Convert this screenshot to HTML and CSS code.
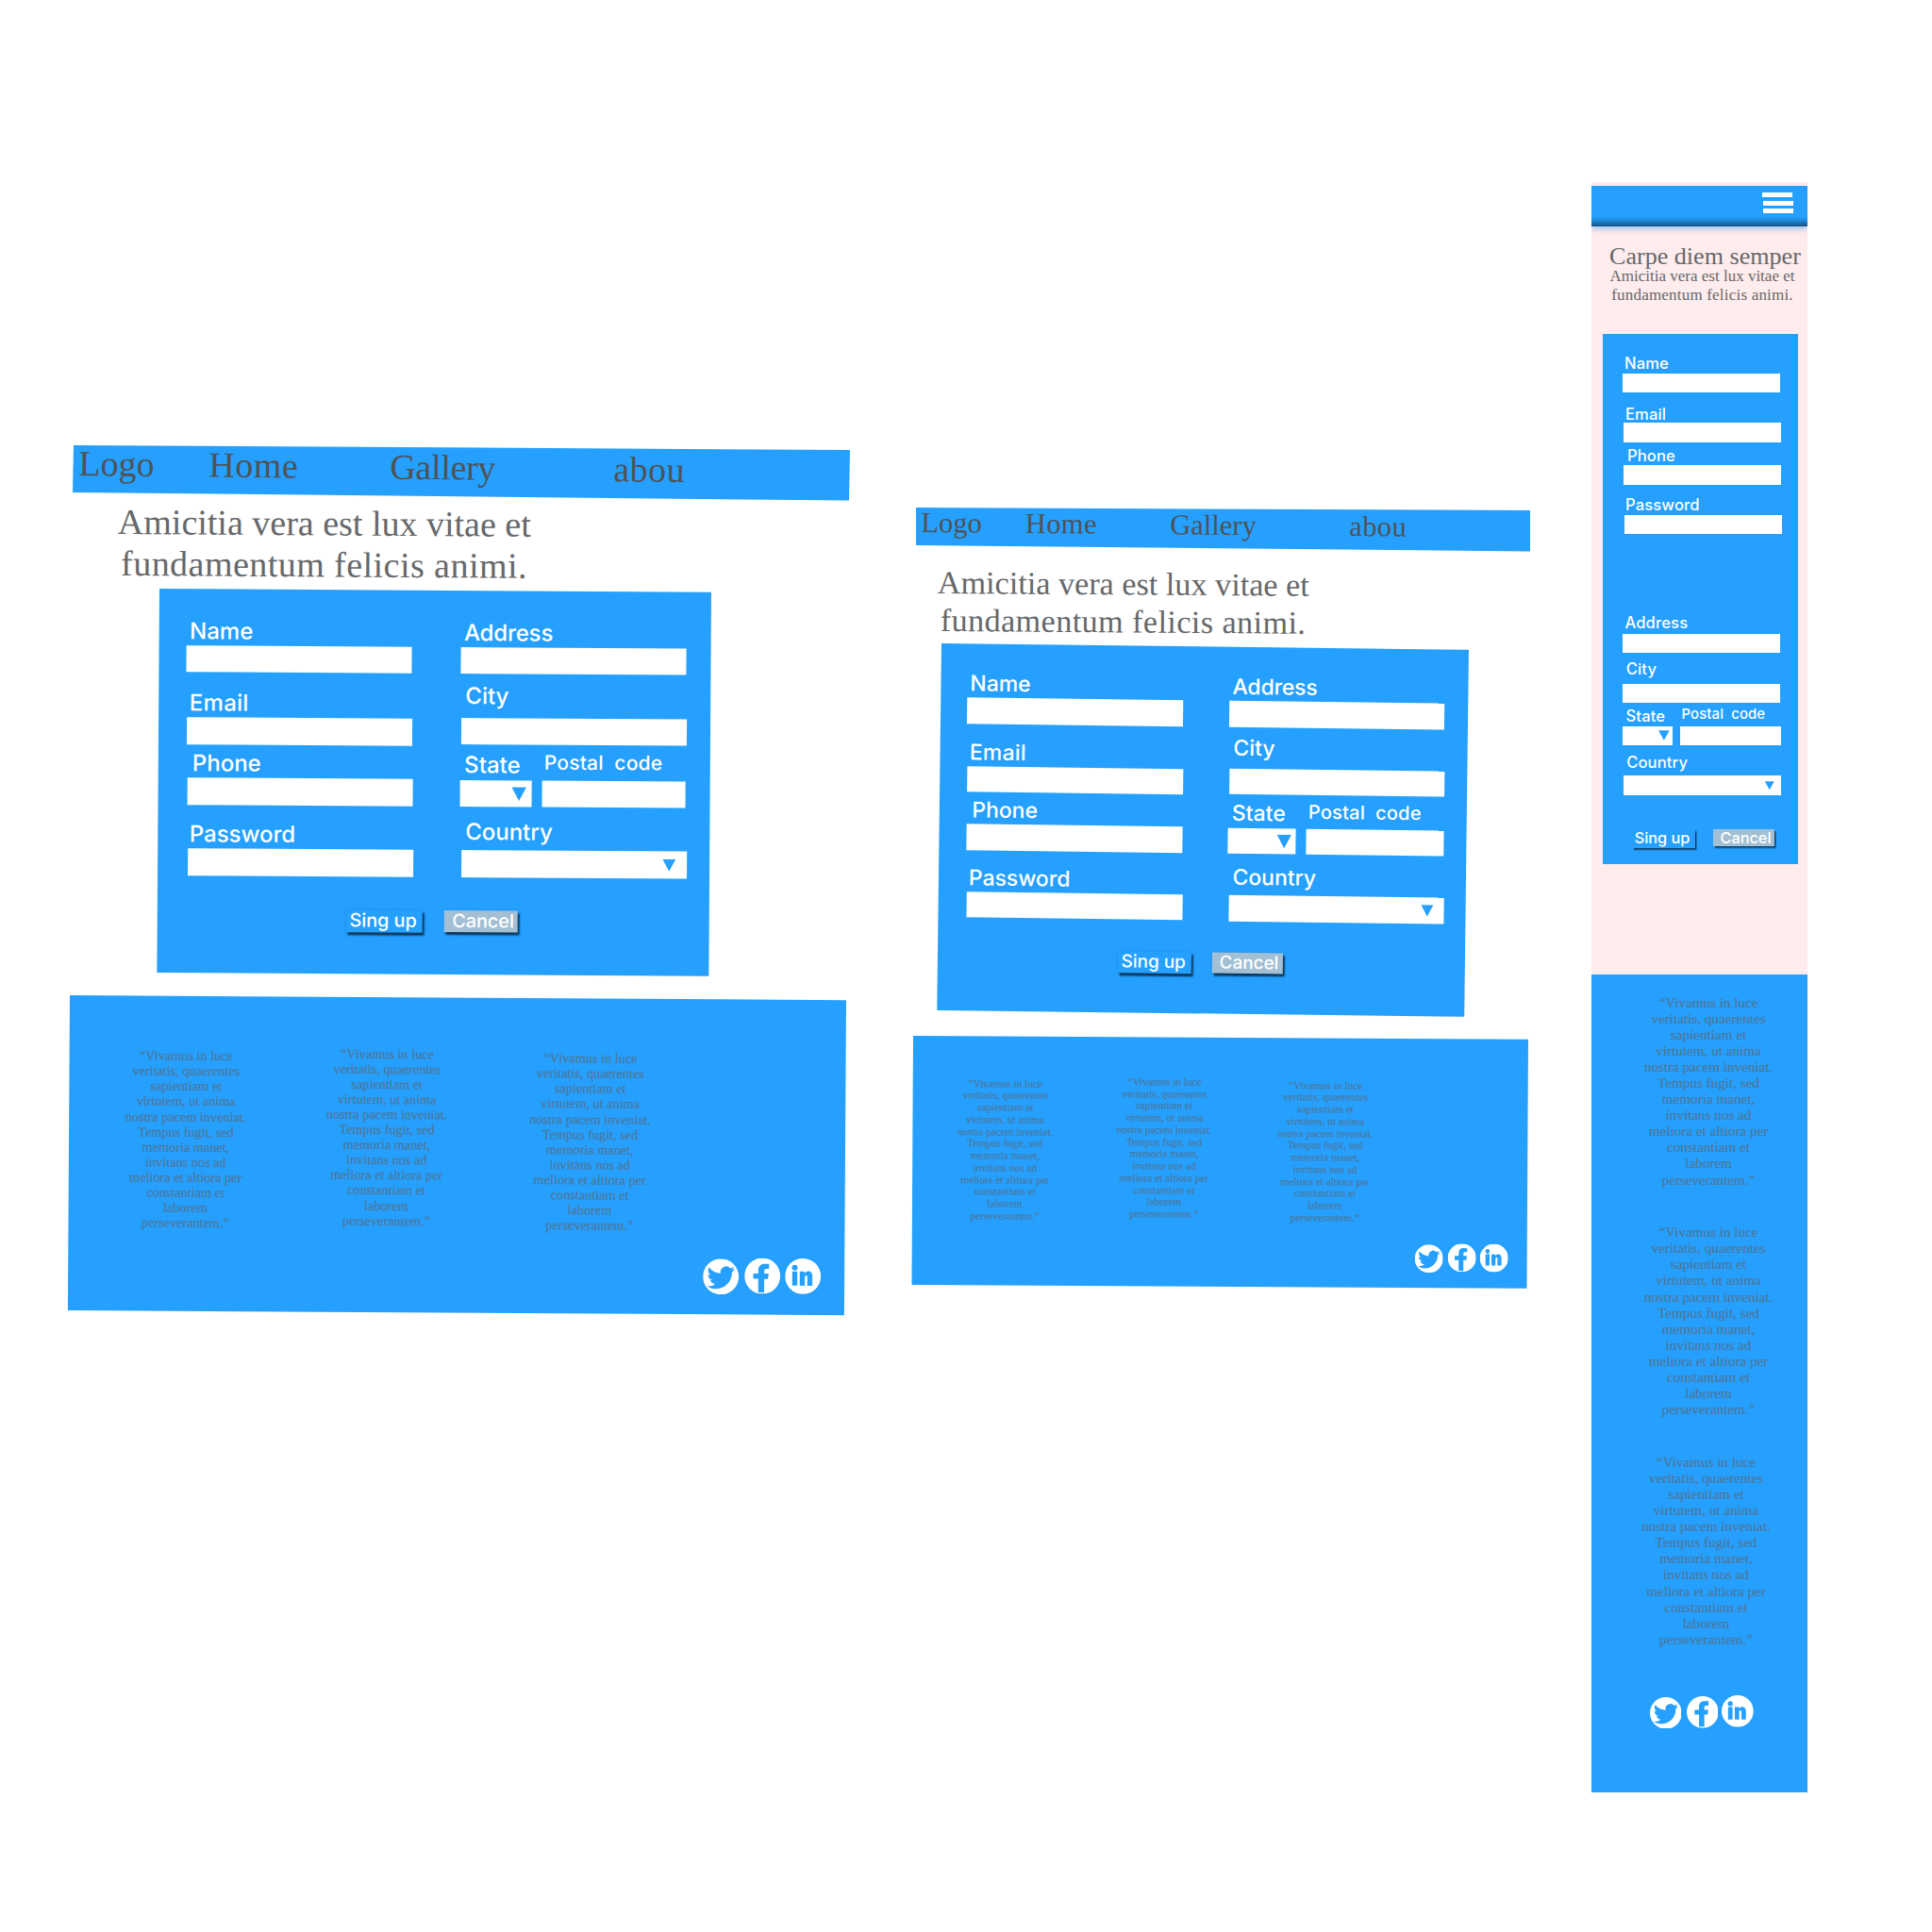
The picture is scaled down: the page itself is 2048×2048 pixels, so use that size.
FILE: index.html
```html
<!DOCTYPE html>
<html lang="en">
<head>
<meta charset="utf-8">
<title>Sign up form</title>
<link rel="stylesheet" href="styles.css">
</head>
<body>
<svg class="sprite" aria-hidden="true">
  <symbol id="twitter" viewBox="0 0 114 114">
    <circle cx="57" cy="57" r="57" fill="#fff"/>
    <path fill="#25a0ff" transform="translate(13 16) scale(3.67)" d="M23.953 4.57a10 10 0 01-2.825.775 4.958 4.958 0 002.163-2.723c-.951.555-2.005.959-3.127 1.184a4.92 4.92 0 00-8.384 4.482C7.69 8.095 4.067 6.13 1.64 3.162a4.822 4.822 0 00-.666 2.475c0 1.71.87 3.213 2.188 4.096a4.904 4.904 0 01-2.228-.616v.06a4.923 4.923 0 003.946 4.827 4.996 4.996 0 01-2.212.085 4.936 4.936 0 004.604 3.417 9.867 9.867 0 01-6.102 2.105c-.39 0-.779-.023-1.17-.067a13.995 13.995 0 007.557 2.209c9.053 0 13.998-7.496 13.998-13.985 0-.21 0-.42-.015-.63A9.935 9.935 0 0024 4.59z"/>
  </symbol>
  <symbol id="facebook" viewBox="0 0 114 114">
    <circle cx="57" cy="57" r="57" fill="#fff"/>
    <path fill="#25a0ff" d="M44 109V66H28V49H44V38C44 25 52 18 64 18H78V34H70C65 34 63 36 63 41V49H77L75 66H63V109Z"/>
  </symbol>
  <symbol id="linkedin" viewBox="0 0 114 114">
    <circle cx="57" cy="57" r="57" fill="#fff"/>
    <circle cx="31" cy="30" r="9" fill="#25a0ff"/>
    <path fill="#25a0ff" d="M23 42H39V87H23ZM47 42H62V48C65 44 69 41 74 41C83 41 87 48 87 58V87H71V61C71 57 70 54 67 54C64 54 63 57 63 61V87H47Z"/>
  </symbol>
</svg>

<main class="board desktop">
  <nav class="nav"><div class="links"><a>Logo</a><a>Home</a><a>Gallery</a><a>abou</a></div></nav>
  <h1 class="heading">Amicitia vera est lux vitae et<br><span class="wide">fundamentum felicis animi.</span></h1>
  <div class="form-slot">
    <form class="form">
      <div class="columns">
        <div class="col">
          <div class="field name"><label>Name</label><span class="box"></span></div>
          <div class="field email"><label>Email</label><span class="box"></span></div>
          <div class="field phone"><label>Phone</label><span class="box"></span></div>
          <div class="field password"><label>Password</label><span class="box"></span></div>
        </div>
        <div class="col">
          <div class="field address"><label>Address</label><span class="box"></span></div>
          <div class="field city"><label>City</label><span class="box"></span></div>
          <div class="pair">
            <div class="field state"><label>State</label><span class="box"><i class="arrow"></i></span></div>
            <div class="field postal"><label>Postal&nbsp; code</label><span class="box"></span></div>
          </div>
          <div class="field country"><label>Country</label><span class="box"><i class="arrow"></i></span></div>
        </div>
      </div>
      <div class="actions"><span class="btn primary">Sing up</span><span class="btn cancel">Cancel</span></div>
    </form>
  </div>
  <div class="footer-slot">
    <footer class="footer">
      <div class="quotes">
        <p>“Vivamus in luce<br>veritatis, quaerentes<br>sapientiam et<br>virtutem, ut anima<br>nostra pacem inveniat.<br>Tempus fugit, sed<br>memoria manet,<br>invitans nos ad<br>meliora et altiora per<br>constantiam et<br>laborem<br>perseverantem.”</p>
        <p>“Vivamus in luce<br>veritatis, quaerentes<br>sapientiam et<br>virtutem, ut anima<br>nostra pacem inveniat.<br>Tempus fugit, sed<br>memoria manet,<br>invitans nos ad<br>meliora et altiora per<br>constantiam et<br>laborem<br>perseverantem.”</p>
        <p>“Vivamus in luce<br>veritatis, quaerentes<br>sapientiam et<br>virtutem, ut anima<br>nostra pacem inveniat.<br>Tempus fugit, sed<br>memoria manet,<br>invitans nos ad<br>meliora et altiora per<br>constantiam et<br>laborem<br>perseverantem.”</p>
      </div>
      <div class="social"><svg><use href="#twitter"/></svg><svg><use href="#facebook"/></svg><svg><use href="#linkedin"/></svg></div>
    </footer>
  </div>
</main>

<section class="board tablet">
  <nav class="nav"><div class="links"><a>Logo</a><a>Home</a><a>Gallery</a><a>abou</a></div></nav>
  <h1 class="heading">Amicitia vera est lux vitae et<br><span class="wide">fundamentum felicis animi.</span></h1>
  <div class="form-slot">
    <form class="form">
      <div class="columns">
        <div class="col">
          <div class="field name"><label>Name</label><span class="box"></span></div>
          <div class="field email"><label>Email</label><span class="box"></span></div>
          <div class="field phone"><label>Phone</label><span class="box"></span></div>
          <div class="field password"><label>Password</label><span class="box"></span></div>
        </div>
        <div class="col">
          <div class="field address"><label>Address</label><span class="box"></span></div>
          <div class="field city"><label>City</label><span class="box"></span></div>
          <div class="pair">
            <div class="field state"><label>State</label><span class="box"><i class="arrow"></i></span></div>
            <div class="field postal"><label>Postal&nbsp; code</label><span class="box"></span></div>
          </div>
          <div class="field country"><label>Country</label><span class="box"><i class="arrow"></i></span></div>
        </div>
      </div>
      <div class="actions"><span class="btn primary">Sing up</span><span class="btn cancel">Cancel</span></div>
    </form>
  </div>
  <div class="footer-slot">
    <footer class="footer">
      <div class="quotes">
        <p>“Vivamus in luce<br>veritatis, quaerentes<br>sapientiam et<br>virtutem, ut anima<br>nostra pacem inveniat.<br>Tempus fugit, sed<br>memoria manet,<br>invitans nos ad<br>meliora et altiora per<br>constantiam et<br>laborem<br>perseverantem.”</p>
        <p>“Vivamus in luce<br>veritatis, quaerentes<br>sapientiam et<br>virtutem, ut anima<br>nostra pacem inveniat.<br>Tempus fugit, sed<br>memoria manet,<br>invitans nos ad<br>meliora et altiora per<br>constantiam et<br>laborem<br>perseverantem.”</p>
        <p>“Vivamus in luce<br>veritatis, quaerentes<br>sapientiam et<br>virtutem, ut anima<br>nostra pacem inveniat.<br>Tempus fugit, sed<br>memoria manet,<br>invitans nos ad<br>meliora et altiora per<br>constantiam et<br>laborem<br>perseverantem.”</p>
      </div>
      <div class="social"><svg><use href="#twitter"/></svg><svg><use href="#facebook"/></svg><svg><use href="#linkedin"/></svg></div>
    </footer>
  </div>
</section>

<section class="board mobile">
  <nav class="topbar"><div class="burger"><i></i><i></i><i></i></div></nav>
  <h1 class="title">Carpe diem semper</h1>
  <p class="subtitle">Amicitia vera est lux vitae et<br><span class="wide">fundamentum felicis animi.</span></p>
  <form class="form">
    <div class="col">
      <div class="field name"><label>Name</label><span class="box"></span></div>
      <div class="field email"><label>Email</label><span class="box"></span></div>
      <div class="field phone"><label>Phone</label><span class="box"></span></div>
      <div class="field password"><label>Password</label><span class="box"></span></div>
    </div>
    <div class="col">
      <div class="field address"><label>Address</label><span class="box"></span></div>
      <div class="field city"><label>City</label><span class="box"></span></div>
      <div class="pair">
        <div class="field state"><label>State</label><span class="box"><i class="arrow"></i></span></div>
        <div class="field postal"><label>Postal&nbsp; code</label><span class="box"></span></div>
      </div>
      <div class="field country"><label>Country</label><span class="box"><i class="arrow"></i></span></div>
      <div class="actions"><span class="btn primary">Sing up</span><span class="btn cancel">Cancel</span></div>
    </div>
  </form>
  <footer class="footer">
    <div class="quotes">
      <p>“Vivamus in luce<br>veritatis, quaerentes<br>sapientiam et<br>virtutem, ut anima<br>nostra pacem inveniat.<br>Tempus fugit, sed<br>memoria manet,<br>invitans nos ad<br>meliora et altiora per<br>constantiam et<br>laborem<br>perseverantem.”</p>
      <p>“Vivamus in luce<br>veritatis, quaerentes<br>sapientiam et<br>virtutem, ut anima<br>nostra pacem inveniat.<br>Tempus fugit, sed<br>memoria manet,<br>invitans nos ad<br>meliora et altiora per<br>constantiam et<br>laborem<br>perseverantem.”</p>
      <p>“Vivamus in luce<br>veritatis, quaerentes<br>sapientiam et<br>virtutem, ut anima<br>nostra pacem inveniat.<br>Tempus fugit, sed<br>memoria manet,<br>invitans nos ad<br>meliora et altiora per<br>constantiam et<br>laborem<br>perseverantem.”</p>
    </div>
    <div class="social"><svg><use href="#twitter"/></svg><svg><use href="#facebook"/></svg><svg><use href="#linkedin"/></svg></div>
  </footer>
</section>
</body>
</html>
```
FILE: styles.css
```css
* { box-sizing: border-box; }

body {
  margin: 0;
  width: 2048px;
  height: 2048px;
  overflow: hidden;
  display: flex;
  align-items: flex-start;
  background: #fff;
  font-family: "Liberation Serif", serif;
  color: #505256;
}

.sprite { display: none; }
h1, p { margin: 0; font-weight: 400; }
.board { flex: none; }

/* Board placement */
.desktop { width: 824px; margin: 472px 0 0 77px; }
.tablet { width: 651px; margin: 538px 0 0 70px; }
.mobile { width: 229px; height: 1707px; margin: 193px 0 0 65px; padding-top: 4px; background: #ffecec; }

/* Navigation bars */
.nav { background: #25a0ff; }
.links { display: grid; transform-origin: 0 0; }
.desktop .nav { height: 59px; clip-path: polygon(1px 0, 824px 5px, 823px 58.6px, 0 50px); }
.desktop .links { grid-template-columns: 138px 192px 237px auto; padding: 1.2px 0 0 6.6px; font-size: 38px; line-height: 36.4px; transform: rotate(.62deg); }
.desktop .links a:nth-child(even) { letter-spacing: .5px; }
.desktop .links a:nth-child(3) { letter-spacing: -.3px; }
.tablet .nav { height: 46.5px; clip-path: polygon(0 0, 651px 3px, 651px 46.5px, 0 40px); }
.tablet .links { grid-template-columns: 110.5px 153.5px 190px auto; padding: 1.2px 0 0 5.5px; font-size: 30.5px; line-height: 30px; transform: rotate(.5deg); }
.tablet .links a:nth-child(even) { letter-spacing: .4px; }

/* Headings */
.heading { width: 440px; text-align: center; white-space: nowrap; color: #66686a; transform-origin: 0 0; }
.wide { letter-spacing: .012em; }
.desktop .heading { margin-left: 47px; font-size: 38px; line-height: 44px; transform: rotate(.36deg); }
.tablet .heading { width: 394px; margin: 13px 0 0 22.8px; font-size: 34.2px; line-height: 39.6px; transform: rotate(.4deg); }

/* Forms */
.form { background: #25a0ff; font-family: Inter, sans-serif; font-weight: 500; color: #fff; }
.desktop .form-slot { margin: 5.2px 0 0 91.9px; }
.tablet .form-slot { margin: 5px 0 0 27px; }
.desktop .form, .tablet .form { width: 584.5px; height: 407px; padding-top: 29.7px; transform-origin: 0 0; }
.desktop .form { transform: rotate(.37deg); }
.tablet .form { zoom: .956; transform: rotate(.7deg); }

.columns { display: flex; gap: 49.4px; padding-left: 29.4px; }
.columns .col { width: 241px; }
.field { margin-top: var(--top, 0); padding-left: var(--x, 0); }
.field label { display: block; height: 30px; margin-bottom: var(--gap, 0); padding-left: var(--indent, 3px); font-size: 24px; line-height: 30px; white-space: nowrap; }
.box { display: flex; justify-content: flex-end; width: 239px; height: 28.8px; background: #fff; }
.pair { display: flex; align-items: flex-end; gap: 11.4px; margin-top: 3.9px; padding-left: .6px; }
.arrow { width: 16px; height: 15px; margin: 7px 5px 0 0; background: #25a0ff; clip-path: polygon(0 0, 100% 0, 50% 100%); }

.email { --top: 17.4px; --x: 1px; --indent: 2.3px; }
.email label { letter-spacing: .25px; }
.phone { --top: 5.3px; --x: 1.2px; --indent: 5.5px; }
.password { --top: 16.2px; --x: 2.2px; --indent: 1.9px; }
.address { --indent: 3.5px; }
.address label { letter-spacing: -.15px; }
.city { --top: 8.8px; --x: 1.3px; --gap: 7.4px; --indent: 4px; }
.state { --gap: 1px; --indent: 4px; }
.state .box { width: 75.2px; }
.postal { --gap: 3.3px; --indent: 2px; }
.postal .box { width: 152.5px; }
.field.postal label { font-size: 21px; letter-spacing: .2px; }
.country { --top: 11.6px; --x: 1.9px; --gap: 4.2px; --indent: 4.2px; }
.country .arrow { width: 14px; height: 13px; margin: 8px 11.5px 0 0; }

.actions { display: flex; align-items: flex-start; gap: 23.5px; margin: 35.2px 0 0 199.9px; }
.btn { height: 24px; width: 81px; padding-right: 2px; font-size: 19.8px; line-height: 22.2px; text-align: center; white-space: nowrap; background: #25a0ff; box-shadow: 2px 3px 2px #0b3557, 0 0 3px rgba(0, 60, 120, .2); }
.btn.cancel { width: 78px; height: 22.6px; padding: 0 0 0 4px; background: #a3bfd3; }

/* Footers */
.footer { background: #25a0ff; }
.desktop .footer-slot { margin: 23.4px 0 0 -3px; }
.tablet .footer-slot { margin: 27px 0 0 -3px; }
.desktop .footer, .tablet .footer { width: 823px; height: 333.5px; transform: rotate(.36deg); transform-origin: 0 0; }
.tablet .footer { zoom: .792; transform: rotate(.33deg); }
.quotes { color: #4f7799; text-align: center; -webkit-text-stroke: .2px #4f7799; }
.desktop .quotes, .tablet .quotes { display: grid; grid-template-columns: 213px 213px 218px; height: 273.5px; padding: 55.2px 0 0 17.4px; font-size: 14.25px; line-height: 16.1px; }
.desktop .quotes p:nth-child(2), .tablet .quotes p:nth-child(2) { margin-top: -3.6px; }
.social { display: flex; padding-left: 672.8px; }
.social svg { width: 38px; height: 38px; margin: 1.2px 6.2px 0 0; }
.social svg:nth-child(2) { margin: .7px 4.8px 0 0; }
.social svg:nth-child(3) { margin: 0; }

/* Mobile board */
.topbar { height: 42.5px; padding: 7.2px 0 0 181px; background: linear-gradient(#25a0ff 76%, #1f86d6 86%, #14517f); box-shadow: 0 3px 6px rgba(80, 160, 240, .55); clip-path: inset(0 0 -14px 0); }
.burger i { display: block; width: 32.3px; height: 5.2px; margin-bottom: 3.3px; background: #fff; }
.burger i:nth-child(2) { margin-left: .5px; }
.burger i:nth-child(3) { margin-left: 1px; }
.title { margin: 18.2px 0 0 19px; font-size: 26.1px; line-height: 28px; white-space: nowrap; color: #66686a; }
.subtitle { width: 200px; margin: -2.4px 0 0 17.5px; text-align: center; font-size: 17px; line-height: 19.4px; white-space: nowrap; color: #66686a; }
.subtitle .wide { letter-spacing: .2px; }

.mobile .form { width: 206.5px; height: 562px; margin: 31.8px 0 0 12.2px; padding-top: 20.7px; }
.mobile .field label { height: 20px; font-size: 16.6px; line-height: 20px; letter-spacing: .12px; }
.mobile .box { width: 167px; height: 20.5px; }
.mobile .name { --x: 20.8px; --gap: 1px; --indent: 2px; }
.mobile .email { --x: 21.8px; --top: 12.5px; --gap: -.6px; --indent: 2px; }
.mobile .phone { --x: 21.8px; --top: 4.4px; --gap: .3px; --indent: 4px; }
.mobile .password { --x: 22.8px; --top: 11.5px; --gap: .7px; --indent: 1px; }
.mobile .address { --x: 20.5px; --top: 83.5px; --gap: 2px; --indent: 2.8px; }
.mobile .city { --x: 21px; --top: 6.8px; --gap: 5.5px; --indent: 3.5px; }
.mobile .pair { gap: 7.7px; margin-top: 2.2px; padding-left: 20.8px; }
.mobile .state { --gap: .7px; --indent: 3.5px; }
.mobile .state .box { width: 53px; }
.mobile .postal { --gap: 2.5px; --indent: 1.8px; }
.mobile .field.postal label { font-size: 14.9px; }
.mobile .postal .box { width: 107.3px; }
.mobile .country { --x: 22px; --top: 8px; --gap: 3.8px; --indent: 3px; }
.mobile .arrow { width: 11.7px; height: 10.5px; margin: 4.5px 3.3px 0 0; }
.mobile .country .arrow { width: 10px; height: 9px; margin: 6px 7.4px 0 0; }
.mobile .actions { gap: 19px; margin: 36.2px 0 0 30.7px; }
.mobile .btn { width: 67.3px; height: 20px; font-size: 16.3px; line-height: 19.4px; padding-right: 3px; box-shadow: 1.5px 2px 1.5px #0b3557; }
.mobile .btn.cancel { width: 64.7px; height: 18.5px; padding: 0 0 0 4px; }

.mobile .footer { height: 867px; margin-top: 116.8px; padding-top: 20.8px; }
.mobile .quotes { padding-left: 19px; font-size: 15.15px; line-height: 17.1px; }
.mobile .quotes p { margin-bottom: 38.5px; }
.mobile .quotes p:nth-child(3) { margin: 0 0 0 -5px; }
.mobile .social { margin-top: 51.4px; padding-left: 61.7px; }
.mobile .social svg { width: 33.8px; height: 33.8px; margin: 1.4px 5.1px 0 0; }
.mobile .social svg:nth-child(2) { margin: 1px 3.7px 0 0; }
.mobile .social svg:nth-child(3) { margin: 0; }
```
